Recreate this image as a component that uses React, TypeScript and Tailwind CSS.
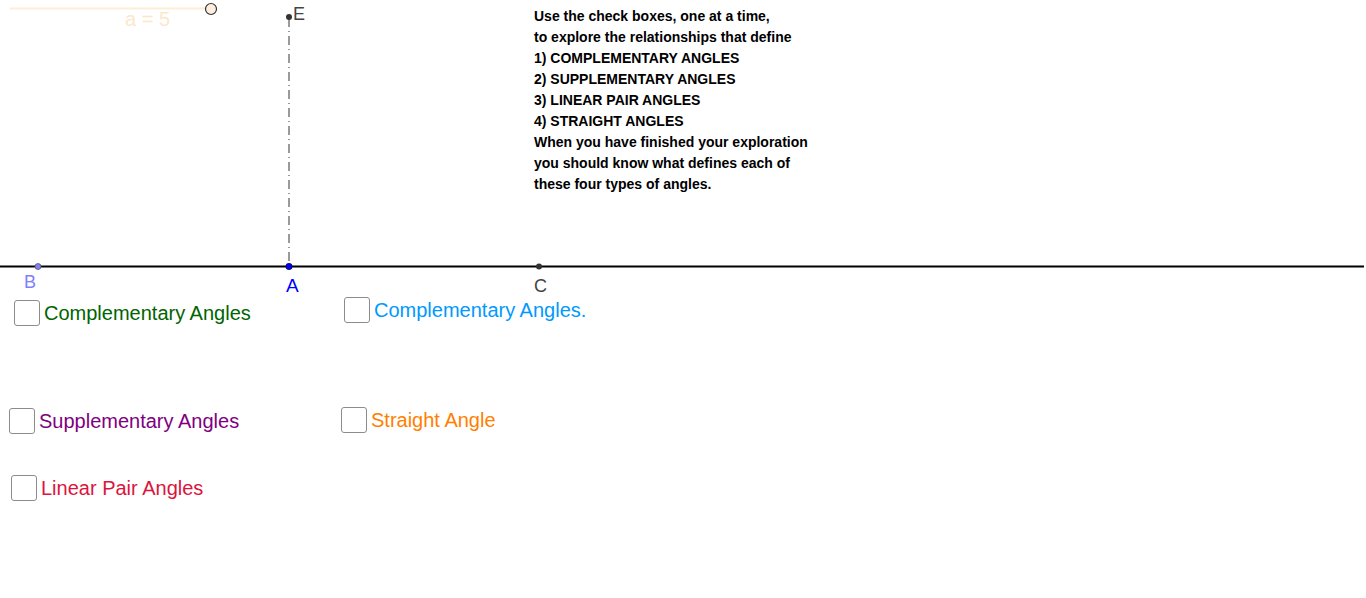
import React from "react";

function Check({ className, textClass, label }: { className: string; textClass: string; label: string }) {
  return (
    <div className={"absolute flex items-center gap-1 " + className}>
      <div className="w-[26px] h-[26px] rounded-[3px] border border-[#8c8c8c] bg-white shrink-0" />
      <span className={"text-[20px] leading-[23px] whitespace-nowrap " + textClass}>{label}</span>
    </div>
  );
}

const lines = [
  "Use the check boxes, one at a time,",
  "to explore the relationships that define",
  "1) COMPLEMENTARY ANGLES",
  "2) SUPPLEMENTARY ANGLES",
  "3) LINEAR PAIR ANGLES",
  "4) STRAIGHT ANGLES",
  "When you have finished your exploration",
  "you should know what defines each of",
  "these four types of angles.",
];

export default function App() {
  return (
    <div className="relative w-[1366px] h-[598px] bg-white overflow-hidden font-['Liberation_Sans',Arial,sans-serif]">
      <svg className="absolute left-0 top-0" width={1366} height={598}>
        <line x1={10} y1={8.5} x2={206} y2={8.5} stroke="#fdeed8" strokeWidth={2} />
        <line x1={289} y1={18} x2={289} y2={265} stroke="#7a7a7a" strokeWidth={1.5} strokeDasharray="9 4 1 4" />
        <line x1={0} y1={266.5} x2={1364} y2={266.5} stroke="#000" strokeWidth={2} />
        <circle cx={211} cy={9} r={5.5} fill="#ffeedd" stroke="#333" strokeWidth={1.2} />
        <circle cx={38} cy={266.5} r={3} fill="#8080ff" stroke="#555" strokeWidth={0.8} />
        <circle cx={289} cy={266.5} r={3.2} fill="#0000ff" stroke="#000" strokeWidth={0.6} />
        <circle cx={539} cy={266.5} r={3} fill="#333" />
        <circle cx={289} cy={17} r={3} fill="#333" />
      </svg>

      <div className="absolute left-[125px] top-[9px] text-[20px] leading-[20px] text-[#fde7cc] whitespace-nowrap">a = 5</div>
      <div className="absolute left-[293px] top-[5px] text-[18px] leading-[18px] text-[#444]">E</div>
      <div className="absolute left-[24px] top-[273px] text-[18px] leading-[18px] text-[#8080ff]">B</div>
      <div className="absolute left-[286px] top-[276px] text-[19px] leading-[19px] text-[#0000ff]">A</div>
      <div className="absolute left-[534px] top-[277px] text-[18px] leading-[18px] text-[#444]">C</div>

      <div className="absolute left-[534px] top-[6px] flex flex-col text-[14px] leading-[21px] font-bold text-black whitespace-nowrap">
        {lines.map((l) => (
          <div key={l}>{l}</div>
        ))}
      </div>

      <Check className="left-[14px] top-[300px]" textClass="text-[#006400]" label="Complementary Angles" />
      <Check className="left-[344px] top-[297px]" textClass="text-[#0099ff]" label="Complementary Angles." />
      <Check className="left-[9px] top-[408px]" textClass="text-[#800080]" label="Supplementary Angles" />
      <Check className="left-[341px] top-[407px]" textClass="text-[#ff7f00]" label="Straight Angle" />
      <Check className="left-[11px] top-[475px]" textClass="text-[#dc143c]" label="Linear Pair Angles" />
    </div>
  );
}
